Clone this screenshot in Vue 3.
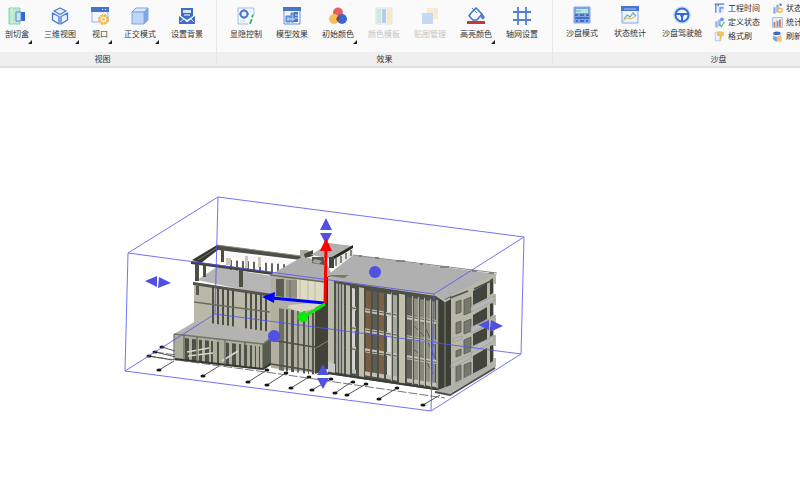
<script setup>
const icons = {
  section: '<path d="M1 1h11v16H1z" fill="#b5e8cf" stroke="#86d3ad"/><path d="M4 1v16" stroke="#d9f5e7"/><path d="M12 5h5v9h-5z" fill="#2f68cf"/><path d="M8 5h5v9H8z" fill="#c9e5ee" stroke="#5289cf"/>',
  cube3d: '<g fill="#e7effd" stroke="#4b79cf" stroke-width="1.3" stroke-linejoin="round"><path d="M9 1l6 3-6 3.500-6-3.500z"/><path d="M1.500 6l6.500 3.500v7.500l-6.500-4z"/><path d="M16.500 6L10 9.500V17l6.500-4z"/></g>',
  viewport: '<path d="M1 1h16v14H1z" fill="#f3f7fe" stroke="#8ab0ec"/><path d="M0 0h18v5H0z" fill="#4773c9"/><path d="M11 2.500h1M14 2.500h1" stroke="#fff"/><circle cx="12.500" cy="12.500" r="4.500" fill="#fff4da" stroke="#f2b647" stroke-width="1.800" stroke-dasharray="2.600 .9"/><circle cx="12.500" cy="12.500" r="3.500" fill="#fff4da" stroke="#f2b647"/><circle cx="12.500" cy="12.500" r="1.300" fill="#f2b647"/>',
  ortho: '<g stroke="#7da4e4" stroke-linejoin="round"><path d="M1 5l4-4h12l-4 4z" fill="#dce9fd"/><path d="M13 5l4-4v12l-4 4z" fill="#7fa6e6"/><path d="M1 5h12v12H1z" fill="#bfd5f8"/></g>',
  background: '<path d="M3 1h12v8l-6 4-6-4z" fill="#3e6dc6"/><path d="M5 3h8v3H5z" fill="#d6e5ff"/><path d="M6 8h6" stroke="#fff"/><path d="M1 9l4 3 4 3 4-3 4-3v8H1z" fill="#3e6dc6"/><path d="M2 15l4-3 3 3 4-3 3 3" fill="none" stroke="#d6e5ff"/>',
  visibility: '<path d="M1 1h16v16H1z" fill="#f2f6fd" stroke="#a2bce8"/><path d="M12 8h6v10h-7z" fill="#fafafa"/><circle cx="7" cy="7" r="3.500" fill="#e6effd" stroke="#4778cf" stroke-width="2"/><path d="M7 2v2M7 10v2M2 7h2M10 7h2" stroke="#4778cf"/><path d="M16 7.500l-1 3M14.700 12L13 17" stroke="#34bb77" stroke-width="2"/><path d="M3 14h5" stroke="#c6d6ef"/>',
  effect: '<path d="M1 1h16v16H1z" fill="#f1f6ff" stroke="#6b94db"/><path d="M0 0h18v4H0z" fill="#4976cc"/><path d="M3 9h4v6H3zM8 6h3v9H8z" fill="#8bade8" stroke="#4b78ca"/><path d="M11 5h4v10h-4z" fill="#4976cc"/><path d="M12 8h3M12 11h3M4 12h8" stroke="#dce9ff"/>',
  colors: '<circle cx="9" cy="5.500" r="5" fill="#e45f5e"/><circle cx="5" cy="12" r="5" fill="#f8bd55"/><circle cx="13" cy="12" r="5" fill="#3868ce"/><path d="M9 9l2 2-2 4-2-3z" fill="#8a433f"/>',
  palette: '<path d="M1 1h16v16H1z" fill="#edf2f9" stroke="#d9e5f2"/><path d="M2 2h4v14H2z" fill="#d0eadf"/><path d="M7 2h4v14H7z" fill="#b7ccee"/><path d="M12 2h4v14h-4z" fill="#f9e9ba"/>',
  sticker: '<path d="M6 1h11v11H6z" fill="#f8ead5"/><path d="M1 6h11v11H1z" fill="#c5d9f7"/>',
  paint: '<path d="M4 6l5-5 6 6-5 6H6L2 9z" fill="#f4f8ff" stroke="#3f72cd" stroke-width="1.500"/><path d="M5 1l5 5M15 7q4 4 1 5-3-1-1-5" stroke="#3f72cd" fill="#5e8cda"/><path d="M0 14h18v3H0z" fill="#c83638"/>',
  gridset: '<path d="M5 0v18M13 0v18M0 5h18M0 13h18" stroke="#4f80d9" stroke-width="1.800"/>',
  sandbox: '<path d="M1 1h16v16H1z" fill="#7ea2e3" stroke="#84a8e6"/><path d="M3 3h12v4H3z" fill="#b7ead7"/><path d="M3 5h5" stroke="#7ea2e3"/><path d="M2 9h3M7 9h4M13 9h3M2 12h14M3 15h2M7 15h4M13 15h2" stroke="#315eb8" stroke-width="1.500"/>',
  stats: '<path d="M1 1h16v16H1z" fill="#edf4fe" stroke="#84a6df"/><path d="M0 0h18v5H0z" fill="#4976cc"/><path d="M3 3h12" stroke="#a9c5f4"/><path d="M3 13l3-4 3 2 3-4 3 3" fill="none" stroke="#66b3a0" stroke-width="1.200"/><path d="M2 15l4-3 4 1 5-3" fill="none" stroke="#e5ab59"/>',
  wheel: '<circle cx="9" cy="9" r="9" fill="#d3e2fb"/><circle cx="9" cy="9" r="6.500" fill="#edf4ff" stroke="#386bd0" stroke-width="2"/><path d="M3 8h12M9 9v6" stroke="#386bd0" stroke-width="2"/><circle cx="9" cy="9" r="2" fill="#386bd0"/>',
  time: '<path d="M1 2h16M3 1v15M7 2v5" stroke="#4c7bcf" stroke-width="2"/><path d="M6 5h10v11H6z" fill="#dce9fd"/><path d="M9 8h7M10 8v8" stroke="#628dd9" stroke-width="2"/>',
  state: '<path d="M2 7h4v10H2zM7 4h4v11H7z" fill="#91b4ed"/><circle cx="13" cy="4" r="3" fill="#6d96df"/><path d="M9 12l3 4 5-8" fill="none" stroke="#53bd8b" stroke-width="2"/>',
  brush: '<path d="M2 2h9v14H2z" fill="#edf4ff" stroke="#8dafe4"/><path d="M5 1h11v7H5zM10 8h3v3l-4 6V9z" fill="#f3c15d"/>',
  gearstate: '<path d="M2 7h4v10H2zM7 3h4v12H7z" fill="#8db1ed"/><circle cx="14" cy="3" r="2" fill="#4b7ed9"/><circle cx="13" cy="12" r="3.500" fill="#fff1ce" stroke="#efb34b" stroke-width="2"/>',
  chart: '<path d="M1 1h16v16H1z" fill="#e7effd" stroke="#719ce3"/><path d="M4 8v8M13 4v12" stroke="#ee6862" stroke-width="3"/><path d="M9 6v10" stroke="#4bb480" stroke-width="3"/>',
  refresh: '<ellipse cx="8" cy="4" rx="6" ry="3" fill="#3d6bc3"/><path d="M2 6c3 3 9 3 12 0v8c-3 4-9 4-12 0z" fill="#789fe2"/><path d="M8 9h8v8H8z" fill="#f4c466"/><path d="M3 7q5 3 10 0" fill="none" stroke="#fff" stroke-width="2"/>',
}

const groups = [
  {
    id: 'view', title: '视图',
    tools: [
      { label: '剖切盒', icon: 'section', more: true },
      { label: '三维视图', icon: 'cube3d', more: true },
      { label: '视口', icon: 'viewport', more: true },
      { label: '正交模式', icon: 'ortho', more: true },
      { label: '设置背景', icon: 'background' },
    ],
  },
  {
    id: 'effects', title: '效果',
    tools: [
      { label: '显隐控制', icon: 'visibility' },
      { label: '模型效果', icon: 'effect' },
      { label: '初始颜色', icon: 'colors', more: true },
      { label: '颜色模板', icon: 'palette', disabled: true },
      { label: '贴图管理', icon: 'sticker', disabled: true },
      { label: '高亮颜色', icon: 'paint', more: true },
      { label: '轴网设置', icon: 'gridset' },
    ],
  },
  {
    id: 'sandbox', title: '沙盘',
    tools: [
      { label: '沙盘模式', icon: 'sandbox' },
      { label: '状态统计', icon: 'stats' },
      { label: '沙盘驾驶舱', icon: 'wheel' },
    ],
    small: [
      { label: '工程时间', icon: 'time' },
      { label: '状态', icon: 'gearstate' },
      { label: '定义状态', icon: 'state' },
      { label: '统计', icon: 'chart' },
      { label: '格式刷', icon: 'brush' },
      { label: '刷新', icon: 'refresh' },
    ],
  },
]

// A vertical strip of a facade whose edges run parallel to the slope.
const strip = (x, w, y, h, x0, slope) => {
  const a = y + (x - x0) * slope
  const b = y + (x + w - x0) * slope
  return `${x},${a} ${x + w},${b} ${x + w},${b + h} ${x},${a + h}`
}

const glazing = [
  [352, 3, '#d2d3d0'], [366, 5, '#755c43'], [373, 4, '#5b5c58'], [379, 5, '#7d6046'],
  [387, 4, '#d9dad8'], [393, 4, '#a8a99f'], [407, 5, '#61635a'], [414, 4, '#8f9086'],
  [420, 4, '#85867c'], [426, 4, '#8e8f85'], [432, 3, '#8b8c82'],
].map(([x, w, fill]) => ({ fill, points: strip(x, w, 285, 85, 334, 0.165) }))

const spandrels = [305, 325, 345, 368].flatMap((y) =>
  [[352, 4], [365, 5], [372, 5], [379, 5], [386, 5], [393, 4], [407, 5], [414, 4], [420, 4], [426, 4], [432, 4]]
    .map(([x, w]) => strip(x, w, y, 4, 345, 0.165)),
)

const columns = [
  [336, 2, '#a5a59b'], [339, 2, '#a5a59b'], [342, 2, '#b0b0a5'],
  [346, 4, '#bdbbab'], [359, 5, '#bfbdac'], [399, 6, '#c2c1b0'], [391, 1, '#a9a99d'],
  [412, 1, '#b4b3a5'], [418, 1, '#b4b3a5'], [424, 1, '#bcbbac'], [430, 1, '#bcbbac'], [436, 2, '#a3a295'],
].map(([x, w, fill]) => ({ fill, points: strip(x, w, 283, 89, 334, 0.165) }))

const floorLines = [305, 325, 346].map((y) => `M334 ${y}L440 ${y + 17}`)

const leftSlots = [212, 217, 222, 227, 232, 245, 250, 255, 260, 265]
  .map((x) => strip(x, 2, 287, 38, 212, 0.15))

const annexSlots = [[185, 4], [192, 4], [199, 3], [205, 4], [211, 2], [217, 2], [226, 3], [232, 4], [239, 2], [244, 3], [250, 2], [255, 1], [259, 1]]
  .map(([x, w]) => strip(x, w, 338, 22, 184, 0.11))

const middleSlots = [[279, 5, '#6d6e66'], [286, 2, '#505449'], [291, 3, '#505449'], [297, 2, '#6a6c60'], [303, 2, '#505449'], [308, 1, '#505449'], [312, 2, '#505449']]
  .map(([x, w, fill]) => ({ fill, points: strip(x, w, 308, 62, 276, 0.12) }))

const railPosts = [231, 237, 243, 248, 254, 260, 266, 272, 278, 284, 290]

const piles = [
  [159, 370, 174, 361], [203, 376, 219, 366], [248, 382, 267, 370], [267, 385, 286, 373],
  [291, 388, 309, 377], [312, 390, 331, 379], [335, 393, 353, 381], [347, 395, 366, 384],
  [379, 399, 397, 388], [423, 405, 440, 395], [149, 356, 172, 360], [155, 352, 176, 357], [162, 347, 178, 352],
]
const pileEnds = [[267, 370], [286, 373], [309, 377], [331, 379], [353, 382], [366, 384], [397, 388]]

const sideBays = [
  'M473 291l14-8v15l-14 7z', 'M473 315l14-8v12l-14 8z', 'M473 334l14-7v13l-14 7z', 'M473 356l14-8v19l-14 8z',
]
const sideWindows = [
  'M464 300l7-3v15l-7 3z', 'M464 322l7-3v12l-7 3z', 'M464 340l7-3v14l-7 3z', 'M464 365l7-3v17l-7 3z',
  'M456 302l5-2v12l-5 2z', 'M456 323l5-2v11l-5 2z', 'M456 351l5-2v6l-5 2z', 'M456 367l5-2v17l-5 3z',
]
const balconies = [
  'M471 307L494 296v5L471 312z', 'M471 327L494 317v5L471 333z', 'M471 347L494 336v5L471 353z', 'M453 339l9-3v3l-9 3zM451 364l20-10v4l-20 10z',
]
</script>

<template>
  <div class="app">
    <header class="ribbon">
      <section v-for="g in groups" :key="g.id" :class="['group', g.id]" :aria-label="g.title">
        <div class="tools">
          <button v-for="t in g.tools" :key="t.label" type="button" class="tool" :disabled="t.disabled">
            <svg class="icon" viewBox="0 0 18 18" aria-hidden="true" v-html="icons[t.icon]"></svg>
            <span>{{ t.label }}</span>
            <i v-if="t.more" class="more"></i>
          </button>
          <div v-if="g.small" class="small-tools">
            <button v-for="t in g.small" :key="t.label" type="button" class="small">
              <svg class="mini" viewBox="0 0 18 18" aria-hidden="true" v-html="icons[t.icon]"></svg>
              <span>{{ t.label }}</span>
            </button>
          </div>
        </div>
        <h2 class="title">{{ g.title }}</h2>
      </section>
    </header>

    <main class="canvas">
      <svg class="model" viewBox="110 185 430 235" role="img" aria-label="三维视图">
        <!-- axis grid and piles -->
        <g stroke="#555" stroke-width="1" fill="none">
          <path d="M147 356L280 374L445 398M155 352L190 357" stroke="#777" stroke-dasharray="9 2" />
          <path v-for="(p, i) in piles" :key="i" :d="`M${p[0]} ${p[1]}L${p[2]} ${p[3]}`" />
        </g>
        <g fill="#151515">
          <ellipse v-for="p in piles" :key="p[0]" :cx="p[0]" :cy="p[1]" rx="2.600" ry="1.500" />
          <ellipse v-for="p in pileEnds" :key="p[0]" :cx="p[0]" :cy="p[1]" rx="2.400" ry="1.500" />
        </g>

        <!-- west wing -->
        <path d="M194 282L274 296V341L194 327z" fill="#bab9a9" />
        <path d="M197 280L217 267L272 276V296z" fill="#b5b5b5" />
        <path d="M219 251L300 262V267L219 256z" fill="#f8f8f8" />
        <path v-for="x in railPosts" :key="x" :d="`M${x} ${260 + (x - 231) * 0.08}v10`" stroke="#50514a" stroke-width="1.800" />
        <path d="M226 258h5v7h-5zM245 256h3v12h-3zM258 257h3v10h-3z" fill="#cac9bb" />
        <path d="M192 260L217 245L223 246L201 263z" fill="#343630" />
        <path d="M198 260L217 248" stroke="#777970" />
        <path d="M217 245L301 256V260L218 250z" fill="#4d4f46" />
        <path d="M217 245L301 256" stroke="#8a8b80" />
        <path d="M191 261L273 272V275L191 264z" fill="#41433b" />
        <path d="M195 264h4v17h-4zM203 264h3v13h-3zM239 269h4v18h-4zM221 249h3v13h-3z" fill="#4c4e44" />
        <path d="M193 282L273 294V297L193 285z" fill="#53554b" />
        <path d="M196 286h3v9h-3z" fill="#55564e" />
        <polygon v-for="p in leftSlots" :key="p" :points="p" fill="#4b4e45" />
        <path d="M194 302L270 312" stroke="#696b5c" stroke-width="1.500" />

        <!-- annex -->
        <path d="M174 334L263 344V370L175 360z" fill="#aeae9d" />
        <polygon v-for="p in annexSlots" :key="p" :points="p" fill="#4d5047" />
        <path d="M187 352l22-4M188 356l25-3M222 361l16-10" stroke="#d7d7d2" stroke-width="1.500" />
        <path d="M263 343L271 337V365L263 370z" fill="#585b50" />
        <path d="M174 334L196 321L272 332L268 341L263 344z" fill="#b3b3b2" />
        <path d="M174 334L263 344L271 338" fill="none" stroke="#737567" stroke-width="1.500" />
        <path d="M175 359L263 369L272 363" fill="none" stroke="#34362f" stroke-width="2" />
        <path d="M174 334V360M184 335V361M197 337V363M225 340V366M245 342V367M263 344V370" stroke="#53564a" />

        <!-- central block -->
        <path d="M271 276L325 280V374L271 368z" fill="#b0afa0" />
        <polygon v-for="s in middleSlots" :key="s.points" :points="s.points" :fill="s.fill" />
        <path d="M276 279h8v18l-8-1z" fill="#5b5c54" />
        <path d="M286 280h11v18l-11-1z" fill="#8f8e7f" />
        <path d="M290 280v18" stroke="#6d6d61" />
        <path d="M297 279L324 281V304L297 300z" fill="#dedac3" />
        <path d="M300 279v20M308 280v21M315 281v22" stroke="#bdb9a0" />
        <path d="M273 298L297 300" stroke="#64665a" stroke-width="1.500" />
        <path d="M289 305L322 302V307L301 312L288 308z" fill="#d9d6c3" />
        <path d="M271 340L314 347L333 339M271 364L314 371" fill="none" stroke="#4d5046" stroke-width="1.500" />
        <path d="M315 308L328 301V369L315 374z" fill="#414338" />
        <path d="M316 348L333 338" stroke="#898b78" />
        <path d="M270 275L302 257L326 261L332 275L325 282z" fill="#aeaeaf" />
        <path d="M270 275L325 282" stroke="#67685f" stroke-width="1.500" />
        <path d="M300 250h7l6 3-6 4h-7z" fill="#a9aa9e" />
        <path d="M304 254L313 250V256L305 258z" fill="#45473f" />

        <!-- east block -->
        <path d="M328 276L442 296V391L328 374z" fill="#4d5047" />
        <polygon v-for="s in glazing" :key="s.points" :points="s.points" :fill="s.fill" />
        <path d="M410 311l13 12 11 23M411 323l15 15 9 20M410 346l15 13 8 15" stroke="#5d6259" fill="none" />
        <polygon v-for="p in spandrels" :key="p" :points="p" fill="#c2c1b3" />
        <path v-for="d in floorLines" :key="d" :d="d" stroke="#5b5e53" />
        <polygon v-for="s in columns" :key="s.points" :points="s.points" :fill="s.fill" />
        <path d="M328 277h6v96l-6-1z" fill="#bab8a8" />
        <path d="M327 277v28" stroke="#30322b" stroke-width="2" />
        <path d="M328 361l7 3v9l-7-2z" fill="#c8c8c6" />
        <path d="M328 373L442 390" stroke="#3b3e37" stroke-width="2" />
        <path d="M439 295L452 291V391L439 391z" fill="#3c3f36" />
        <path d="M445 297v93" stroke="#62655a" stroke-width="2" />
        <path d="M451 296L496 274V367L451 388z" fill="#b7b6a7" />
        <path v-for="d in sideBays" :key="d" :d="d" fill="#42453c" />
        <path v-for="d in sideWindows" :key="d" :d="d" fill="#777970" stroke="#55584e" stroke-width=".8" />
        <path v-for="d in balconies" :key="d" :d="d" fill="#b7b8b9" stroke="#96978f" stroke-width=".6" />
        <path d="M490 280l3-2v15l-3 2zM490 304l3-1v12l-3 2zM490 327l3-1v9l-3 2zM490 346l3-1v16l-3 2z" fill="#3d4037" />
        <path d="M494 284h3v10h-3zM494 305h3v10h-3zM494 325h3v10h-3zM494 346h3v12h-3z" fill="#fff" />
        <path d="M435 391L449 394L495 368L493 363L451 385z" fill="#b0b1ad" />
        <path d="M435 392L450 395L495 368" fill="none" stroke="#4c4f45" stroke-width="2" />

        <!-- roof -->
        <path d="M329 274L353 255L497 274L482 281L443 300L434 294L331 279z" fill="#b0b0b1" />
        <path d="M353 255L497 273" stroke="#8c8e88" />
        <path d="M359 256h3M375 258h4M396 261h9M420 264h3M440 267h9M472 271h5M489 273h5" stroke="#73756d" stroke-width="1.500" />
        <path d="M331 275h18l-5 3-15-2z" fill="#77786d" />
        <path d="M329 279L436 295L445 301L496 275" fill="none" stroke="#b9b8a9" stroke-width="2" />
        <path d="M450 298L468 291M474 289L493 280" stroke="#4f5148" stroke-width="1.500" />
        <path d="M311 255L329 243L353 246L333 259z" fill="#b0b1b1" />
        <path d="M332 257L353 245L353 248L334 260z" fill="#292c26" />
        <path d="M334 259L353 249V255L336 267z" fill="#e5e5e1" />
        <path d="M336 258v8M341 256v7M346 253v6M351 250v6" stroke="#65675c" stroke-width="1.500" />
        <path d="M312 257h12v8l-12-2z" fill="#55584f" />
        <path d="M315 259l7 2-3 3-7-2z" fill="#a3a5a2" />
        <path d="M329 257h5v11h-5z" fill="#42453d" />

        <!-- section box -->
        <g fill="none" stroke="#5252ef" stroke-width="1" opacity=".8">
          <path d="M218 197L524 237L434 294L128 253z" />
          <path d="M215 314L521 354L431 411L125 371z" />
          <path d="M218 197L215 314M524 237L521 354M434 294L431 411M128 253L125 371" />
        </g>
        <g fill="#5050e2">
          <path d="M326 218l6 12h-12zM320 233h12l-6 11z" />
          <path d="M323 364l6 11h-12zM317 378h12l-6 11z" />
          <path d="M145 281l12-5v11zM159 277l12 6-13 5z" />
          <path d="M478 325l11-5v10zM491 320l12 6-13 6z" />
          <circle cx="375" cy="272" r="6" />
          <circle cx="274" cy="336" r="6" />
        </g>

        <!-- move gizmo -->
        <path d="M325 304L326 248" stroke="#f00" stroke-width="3" />
        <path d="M326 238l6 13h-12z" fill="#f00" />
        <path d="M324 303L272 298" stroke="#00f" stroke-width="3" />
        <path d="M262 297l13-5-1 11z" fill="#00f" />
        <path d="M325 304L305 316" stroke="#0e0" stroke-width="3" />
        <circle cx="303" cy="317" r="5" fill="#0e0" />
      </svg>
    </main>
  </div>
</template>

<style>
body {
  margin: 0;
  background: #fff;
}
</style>

<style scoped>
.app {
  min-height: 100vh;
  overflow: hidden;
  font-family: "Noto Sans CJK SC", sans-serif;
  color: #333;
}
.ribbon {
  display: flex;
  overflow: hidden;
  background: #fafafa;
  border-bottom: 2px solid #dedede;
}
.group {
  flex: none;
  box-sizing: border-box;
  border-right: 1px solid #e8e8e8;
}
.view { margin-left: -11px; }
.tools {
  display: flex;
  align-items: flex-start;
  box-sizing: border-box;
  height: 52px;
  gap: 15px;
  padding: 7px 13px 0 16px;
}
.effects .tools {
  gap: 14px;
  padding: 7px 14px 0 13px;
}
.sandbox .tools {
  gap: 16px;
  padding: 6px 82px 0 13px;
}
button {
  border: 0;
  padding: 0;
  background: none;
  color: inherit;
  font: inherit;
  font-size: 8px;
  line-height: 12px;
  white-space: nowrap;
}
.tool {
  position: relative;
  display: flex;
  flex-direction: column;
  align-items: center;
  gap: 3px;
}
.tool:disabled { color: #c4c4c4; }
.icon {
  width: 18px;
  height: 18px;
}
.more {
  position: absolute;
  right: -3px;
  bottom: -4px;
  border-left: 4px solid transparent;
  border-bottom: 4px solid #222;
}
.small-tools {
  display: grid;
  grid-template-columns: auto auto;
  column-gap: 12px;
  row-gap: 2px;
  margin: -4px 0 0 -4px;
}
.small {
  display: flex;
  align-items: center;
  gap: 3px;
}
.mini {
  width: 11px;
  height: 11px;
}
.title {
  margin: 0;
  background: #efefef;
  font-size: 8px;
  font-weight: 400;
  line-height: 14px;
  text-align: center;
}
.canvas {
  padding: 117px 0 0 110px;
}
.model {
  display: block;
  width: 430px;
  max-width: 100%;
}
</style>
